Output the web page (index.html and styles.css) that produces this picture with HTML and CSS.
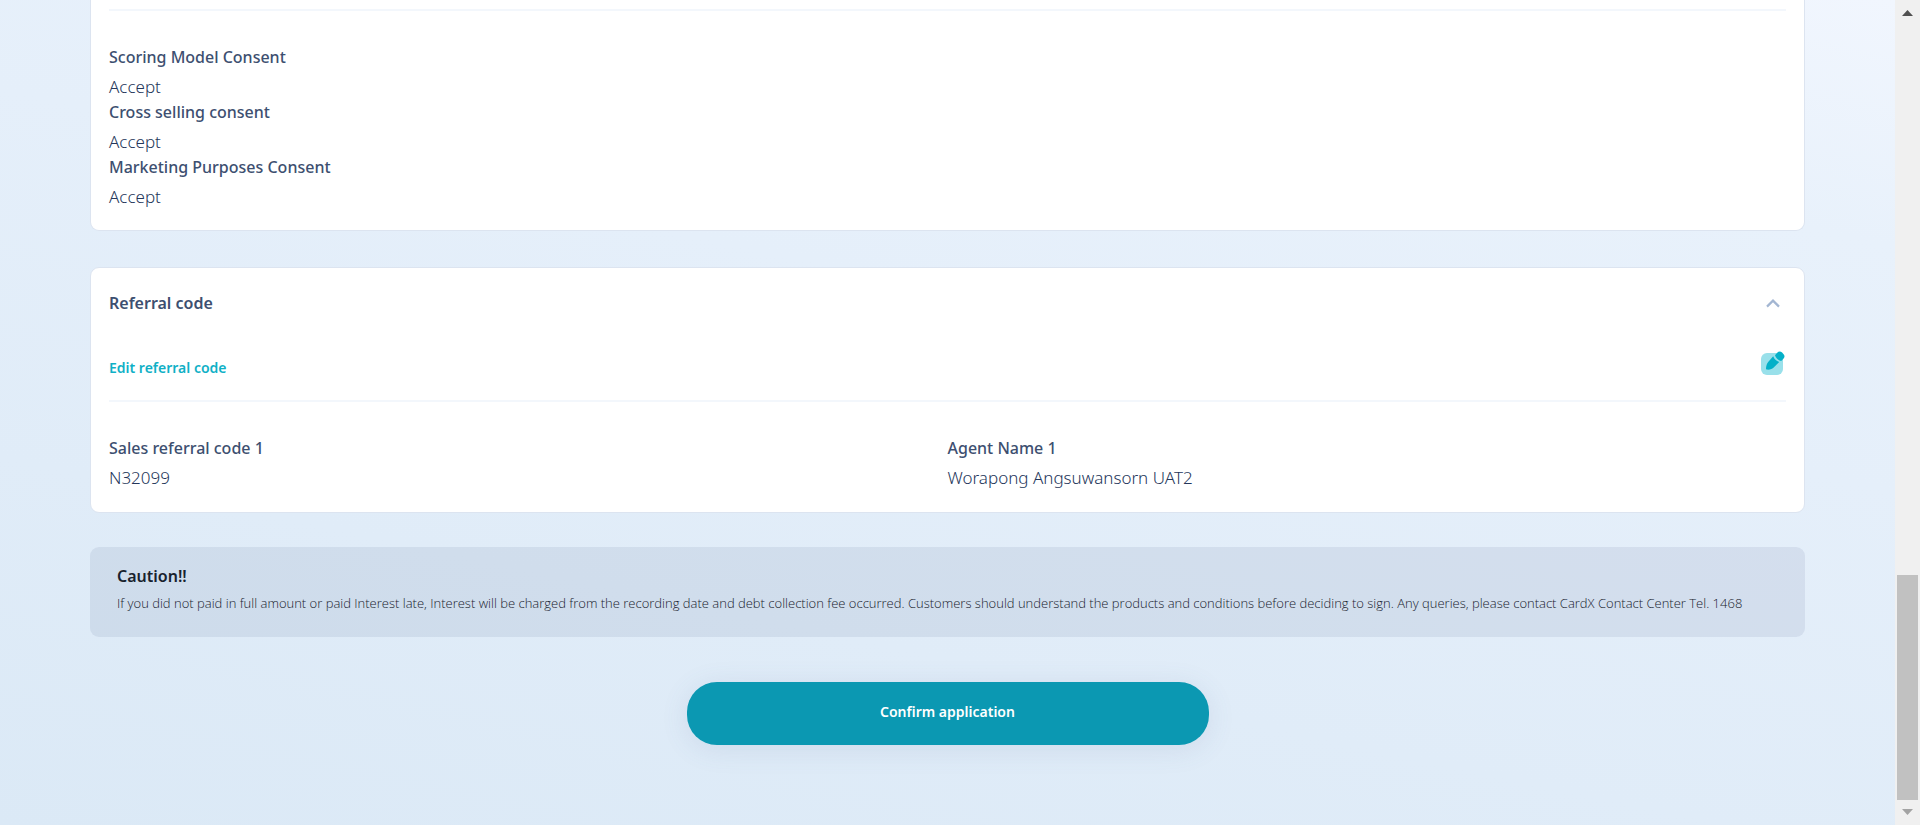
FILE: index.html
```html
<!DOCTYPE html>
<html lang="en">
<head>
<meta charset="utf-8">
<title>Confirm application</title>
<link rel="stylesheet" href="styles.css">
</head>
<body>
<div class="page">
  <main class="content">
    <section class="card card-continued">
      <hr class="divider">
      <dl class="fields">
        <div><dt>Scoring Model Consent</dt><dd>Accept</dd></div>
        <div><dt>Cross selling consent</dt><dd>Accept</dd></div>
        <div><dt>Marketing Purposes Consent</dt><dd>Accept</dd></div>
      </dl>
    </section>

    <section class="card">
      <header class="card-header">
        <h2 class="card-title">Referral code</h2>
        <button class="icon-button" type="button" aria-label="Collapse referral code">
          <svg class="chevron" viewBox="0 0 14 9" width="14" height="9"><path d="M1 7.600 7 1.600l6 6" fill="none" stroke="#a3b6d2" stroke-width="2.200"/></svg>
        </button>
      </header>
      <div class="edit-row">
        <a class="edit-link" href="#">Edit referral code</a>
        <button class="icon-button" type="button" aria-label="Edit">
          <svg viewBox="0 0 24 24" width="24" height="24">
            <rect x="0" y="2" width="22" height="22" rx="6" fill="#99e0ea"/>
            <path d="M12.200 5.200c1 2.700 3 4.700 6 5.700l-5 5.200c-2 2-4.200 2.700-7.200 2.500-.7 0-1-.3-1-1 .1-2.900.8-5.200 2.600-7.200z" fill="#05b0c8"/>
            <path d="M14 4.200 16.200 1.700c1.500-1.600 3.400-1.600 4.900-.1l1.300 1.300c1.500 1.500 1.500 3.300 0 4.800l-2.200 2.300c-2.900-.7-5.300-2.900-6.200-5.800z" fill="#05b0c8"/>
          </svg>
        </button>
      </div>
      <hr class="divider">
      <dl class="fields fields-two">
        <div><dt>Sales referral code 1</dt><dd>N32099</dd></div>
        <div><dt>Agent Name 1</dt><dd>Worapong Angsuwansorn UAT2</dd></div>
      </dl>
    </section>

    <section class="caution">
      <h2 class="caution-title">Caution!!</h2>
      <p class="caution-text">If you did not paid in full amount or paid Interest late, Interest will be charged from the recording date and debt collection fee occurred. Customers should understand the products and conditions before deciding to sign. Any queries, please contact CardX Contact Center Tel. 1468</p>
    </section>

    <button class="confirm" type="button">Confirm application</button>
  </main>

  <div class="scrollbar" aria-hidden="true">
    <svg viewBox="0 0 11 6" width="11" height="6"><path d="M0 6 5.500 0 11 6z" fill="#505050"/></svg>
    <div class="scroll-track"><div class="scroll-thumb"></div></div>
    <svg viewBox="0 0 11 6" width="11" height="6"><path d="M0 0h11L5.500 6z" fill="#a3a3a3"/></svg>
  </div>
</div>
</body>
</html>
```
FILE: styles.css
```css
* {
  box-sizing: border-box;
}

body {
  margin: 0;
  font-family: "Noto Sans", "Open Sans", sans-serif;
  font-size: 16px;
  line-height: 25px;
  color: #3d4f70;
}

h2, p, dl, dd {
  margin: 0;
}

.page {
  display: flex;
  min-height: 100vh;
}

.content {
  flex: 1;
  display: flex;
  flex-direction: column;
  padding: 0 90px;
  background: linear-gradient(12deg, #dbe9f6 0%, #e0ecf8 30%, #e5effa 60%, #e8f1fb 80%, #f1f6fe 100%);
}

.card {
  margin-bottom: 36px;
  padding: 23px 18px 21px;
  border: 1px solid #dce4f0;
  border-radius: 9px;
  background: #fff;
}

.card-continued {
  padding-top: 9px;
  border-top: 0;
  border-radius: 0 0 9px 9px;
}

.divider {
  height: 2px;
  margin: 0 0 34px;
  border: 0;
  background: #f3f7fc;
}

.fields dt {
  margin-bottom: 4px;
  font-weight: 500;
}

.fields dd {
  margin-bottom: 1px;
  font-size: 17px;
  font-weight: 300;
  color: #24365a;
}

.fields > div:last-child dd {
  margin-bottom: 0;
}

.fields-two {
  display: grid;
  grid-template-columns: 1fr 1fr;
}

.card-header,
.edit-row {
  display: flex;
  justify-content: space-between;
}

.card-header {
  align-items: center;
  margin-bottom: 35px;
  padding-right: 6px;
}

.card-title {
  font-size: 16px;
  font-weight: 600;
}

.icon-button {
  display: flex;
  padding: 0;
  border: 0;
  background: none;
}

.edit-row {
  margin-bottom: 20px;
  padding-right: 1px;
}

.edit-link {
  padding-top: 4px;
  font-size: 14px;
  font-weight: 600;
  color: #0fb0c6;
  text-decoration: none;
}

.caution {
  margin-bottom: 45px;
  padding: 17px 27px 21px;
  border-radius: 9px;
  background: rgba(80, 100, 150, 0.11);
  color: #18222e;
}

.card + .caution {
  margin-top: -2px;
}

.caution-title {
  margin-bottom: 2px;
  font-size: 16px;
  font-weight: 600;
}

.caution-text {
  font-family: "Open Sans", "Noto Sans", sans-serif;
  font-size: 13px;
  font-weight: 300;
}

.confirm {
  align-self: center;
  width: 522px;
  max-width: 100%;
  padding: 17px 24px 21px;
  border: 0;
  border-radius: 30px;
  background: #0b98b2;
  box-shadow: 0 4px 28px rgba(80, 110, 150, 0.12);
  color: #fff;
  font: 600 14px/25px "Noto Sans", "Open Sans", sans-serif;
}

.scrollbar {
  display: flex;
  flex-direction: column;
  align-items: center;
  width: 25px;
  padding: 10px 2px;
  background: #f0f0f0;
}

.scroll-track {
  flex: 1;
  display: flex;
  align-items: flex-end;
  align-self: stretch;
  padding: 9px 0;
}

.scroll-thumb {
  width: 100%;
  height: 29%;
  background: #c1c1c1;
}
```
